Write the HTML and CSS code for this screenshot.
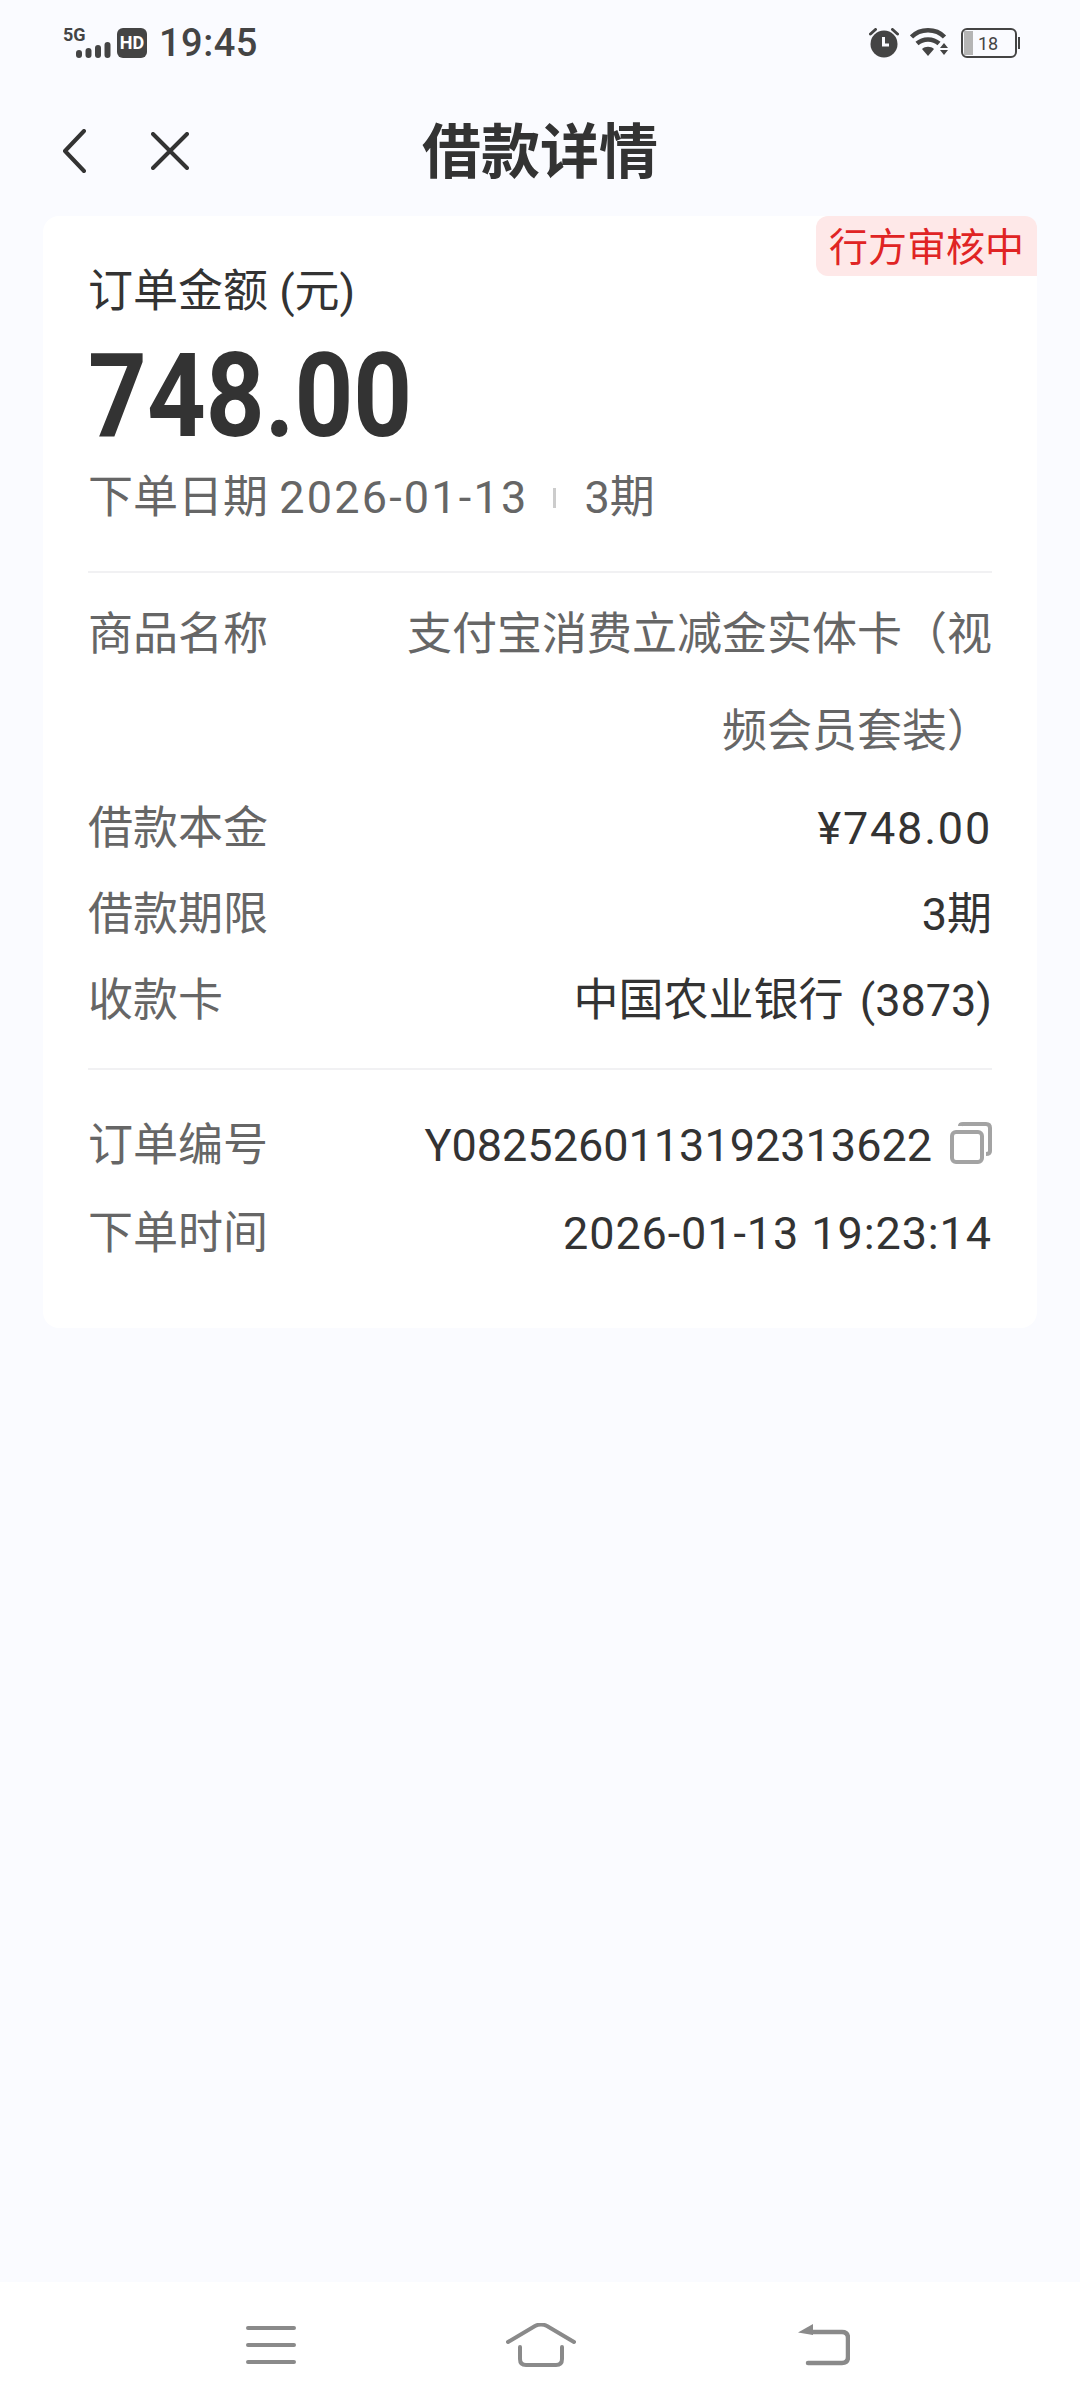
FILE: index.html
```html
<!DOCTYPE html>
<html lang="zh-CN">
<head>
    <meta charset="UTF-8">
    <meta name="viewport" content="width=device-width, initial-scale=1.0">
    <title>借款详情</title>
    <link rel="stylesheet" href="styles.css">
</head>
<body>
<div class="page">
    <div class="status-bar">
        <div class="status-left">
            <div class="signal">
                <span class="signal-type">5G</span>
                <svg class="signal-bars" width="35" height="16" viewBox="0 0 35 16">
                    <rect x="0" y="8" width="6" height="8" rx="3" />
                    <rect x="9.500" y="6" width="6" height="10" rx="3" />
                    <rect x="19" y="3" width="6" height="13" rx="3" />
                    <rect x="28.500" y="0" width="6" height="16" rx="3" />
                </svg>
            </div>
            <span class="hd-badge">HD</span>
            <span class="clock">19:45</span>
        </div>
        <div class="status-right">
            <svg width="30" height="30" viewBox="0 0 30 30">
                <circle cx="15" cy="16" r="13.500" fill="#444" />
                <path d="M1.500 6 L6.500 1.500 M28.500 6 L23.500 1.500" stroke="#444" stroke-width="3" stroke-linecap="round" />
                <path d="M14.500 9 V17 H20" fill="none" stroke="#fafbff" stroke-width="3" />
            </svg>
            <svg class="wifi" width="39" height="30" viewBox="0 0 39 30">
                <path d="M1.500 9 C10 0 26 0 34.500 9" fill="none" stroke="#444" stroke-width="4.500" />
                <path d="M7 15.500 C13 10 23 10 29 15.500" fill="none" stroke="#444" stroke-width="4.500" />
                <path d="M12 21 C15 18 21 18 24 21 L18 28 Z" fill="#444" />
                <path d="M34 15 L38 20 H30 Z M30 22 H38 L34 27 Z" fill="#444" />
            </svg>
            <div class="battery">
                <div class="battery-body">
                    <span class="battery-level"></span>
                    <span class="battery-text">18</span>
                </div>
                <span class="battery-cap"></span>
            </div>
        </div>
    </div>

    <div class="title-bar">
        <div class="title-actions">
            <svg width="24" height="44" viewBox="0 0 24 44">
                <path d="M22 2 L3 22 L22 42" fill="none" stroke="#333" stroke-width="4" stroke-linecap="round" stroke-linejoin="round" />
            </svg>
            <svg width="38" height="38" viewBox="0 0 38 38">
                <path d="M2 2 L36 36 M36 2 L2 36" fill="none" stroke="#333" stroke-width="4" stroke-linecap="round" />
            </svg>
        </div>
        <h1 class="title">借款详情</h1>
    </div>

    <main class="card">
        <span class="status-tag">行方审核中</span>

        <section class="summary">
            <div class="amount-label">订单金额 (元)</div>
            <div class="amount">748.00</div>
            <div class="order-meta">
                <span>下单日期 <span class="meta-date">2026-01-13</span></span>
                <span class="meta-split"></span>
                <span>3期</span>
            </div>
        </section>

        <section class="detail-group">
            <div class="detail-row detail-row-wrap">
                <span class="detail-label">商品名称</span>
                <span class="detail-value detail-value-muted">支付宝消费立减金实体卡（视频会员套装）</span>
            </div>
            <div class="detail-row">
                <span class="detail-label">借款本金</span>
                <span class="detail-value detail-value-wide">¥748.00</span>
            </div>
            <div class="detail-row">
                <span class="detail-label">借款期限</span>
                <span class="detail-value">3期</span>
            </div>
            <div class="detail-row">
                <span class="detail-label">收款卡</span>
                <span class="detail-value detail-value-card">中国农业银行 (3873)</span>
            </div>
        </section>

        <section class="detail-group detail-group-last">
            <div class="detail-row detail-row-id">
                <span class="detail-label">订单编号</span>
                <span class="detail-value detail-value-copy">
                    Y0825260113192313622
                    <svg class="copy-icon" width="42" height="42" viewBox="0 0 42 42">
                        <rect x="2" y="10" width="30" height="30" rx="4" fill="none" stroke="#a3a3a3" stroke-width="4" />
                        <path d="M10 4 Q10 2 13 2 H36 Q40 2 40 6 V29 Q40 32 36 32" fill="none" stroke="#a3a3a3" stroke-width="4" />
                    </svg>
                </span>
            </div>
            <div class="detail-row">
                <span class="detail-label">下单时间</span>
                <span class="detail-value detail-value-time">2026-01-13 19:23:14</span>
            </div>
        </section>
    </main>

    <div class="spacer"></div>

    <nav class="nav-bar">
        <svg width="50" height="38" viewBox="0 0 50 38">
            <path d="M2 2 H48 M2 19 H48 M2 36 H48" stroke="#8a8a8a" stroke-width="4" stroke-linecap="round" />
        </svg>
        <svg class="nav-home" width="70" height="44" viewBox="0 0 70 44">
            <path d="M2 19 L29 3 Q35 0 41 3 L68 19" fill="none" stroke="#8a8a8a" stroke-width="4" stroke-linecap="round" />
            <path d="M14 24 V36 Q14 42 20 42 H50 Q56 42 56 36 V24" fill="none" stroke="#8a8a8a" stroke-width="4" stroke-linecap="round" />
        </svg>
        <svg width="52" height="42" viewBox="0 0 52 42">
            <path d="M14 8 H44 Q50 8 50 14 V33 Q50 39 44 39 H10" fill="none" stroke="#8a8a8a" stroke-width="4.500" stroke-linecap="round" />
            <path d="M0 8.500 L15 0 V11 Z" fill="#8a8a8a" />
        </svg>
    </nav>
</div>
</body>
</html>
```

FILE: styles.css
```css
* {
    box-sizing: border-box;
}

body {
    margin: 0;
    background-color: #fafbff;
    color: #333;
    font-family: Roboto, "Noto Sans CJK SC", sans-serif;
}

.page {
    display: flex;
    flex-direction: column;
    width: 1080px;
    height: 2408px;
    overflow: hidden;
}

/* status bar */
.status-bar {
    display: flex;
    justify-content: space-between;
    align-items: center;
    height: 86px;
    padding: 0 60px 0 63px;
    color: #444;
}

.status-left,
.status-right {
    display: flex;
    align-items: center;
}

.signal {
    display: flex;
    flex-direction: column;
    width: 48px;
    height: 30px;
    margin-right: 6px;
}

.signal-type {
    font-size: 18px;
    font-weight: 700;
    line-height: 14px;
}

.signal-bars {
    align-self: flex-end;
    fill: #444;
}

.hd-badge {
    width: 30px;
    height: 30px;
    border-radius: 6px;
    margin-right: 12px;
    background-color: #444;
    color: #fff;
    font-size: 18px;
    font-weight: 700;
    line-height: 30px;
    text-align: center;
}

.clock {
    font-size: 38px;
    font-weight: 500;
    letter-spacing: 0.500px;
    line-height: 44px;
}

.wifi {
    margin: 0 12px 0 11px;
}

.battery {
    display: flex;
    align-items: center;
}

.battery-body {
    display: flex;
    align-items: center;
    width: 56px;
    height: 30px;
    padding: 1px;
    border: 2.500px solid #444;
    border-radius: 6px;
}

.battery-level {
    width: 9px;
    height: 100%;
    background-color: #b5b5b5;
}

.battery-text {
    margin-left: 5px;
    font-size: 18px;
}

.battery-cap {
    width: 2px;
    height: 12px;
    margin-left: 1px;
    background-color: #444;
}

/* title */
.title-bar {
    display: grid;
    grid-template-columns: 1fr auto 1fr;
    align-items: center;
    height: 130px;
    padding: 0 62px;
}

.title-actions {
    display: flex;
    align-items: center;
    gap: 65px;
}

.title {
    margin: 3px 0 0;
    font-size: 59px;
    font-weight: 700;
    line-height: 80px;
}

/* card */
.card {
    position: relative;
    height: 1112px;
    margin: 0 43px;
    padding: 0 45px;
    border-radius: 16px;
    background-color: #fff;
}

.status-tag {
    position: absolute;
    top: 0;
    right: 0;
    width: 221px;
    height: 60px;
    border-radius: 12px 12px 0 12px;
    background-color: #fee8e8;
    color: #e02424;
    font-size: 39px;
    line-height: 64px;
    text-align: center;
}

.summary {
    height: 357px;
    padding-top: 43px;
    border-bottom: 2px solid #f1f1f3;
}

.amount-label {
    font-size: 45px;
    line-height: 66px;
}

.amount {
    height: 134px;
    margin-top: 4px;
    font-size: 116px;
    font-weight: 700;
    line-height: 134px;
    transform: scaleX(0.885);
    transform-origin: left center;
}

.order-meta {
    display: flex;
    align-items: center;
    margin-top: 2px;
    color: #666;
    font-size: 45px;
    line-height: 66px;
}

.meta-date {
    letter-spacing: 2.200px;
}

.meta-split {
    width: 3px;
    height: 20px;
    margin: 0 28px 0 25px;
    background-color: #ccc;
}

.detail-group {
    padding: 13px 0 24px;
    border-bottom: 2px solid #f1f1f3;
}

.detail-group-last {
    padding-top: 33px;
    border-bottom: 0;
}

.detail-row {
    display: flex;
    justify-content: space-between;
    align-items: flex-start;
    font-size: 45px;
    line-height: 86px;
}

.detail-row-wrap {
    margin-bottom: 6px;
    line-height: 97px;
}

.detail-row-id {
    margin-bottom: 2px;
}

.detail-label {
    flex-shrink: 0;
    color: #666;
}

.detail-value {
    text-align: right;
}

.detail-value-muted {
    max-width: 590px;
    color: #666;
}

.detail-value-wide {
    letter-spacing: 1.800px;
}

.detail-value-card {
    word-spacing: 5px;
}

.detail-value-time {
    letter-spacing: 0.900px;
}

.detail-value-copy {
    display: flex;
    align-items: center;
    gap: 18px;
    margin-left: auto;
    white-space: nowrap;
}

.copy-icon {
    margin-top: -6px;
}

.spacer {
    flex: 1;
}

/* bottom nav */
.nav-bar {
    display: flex;
    align-items: center;
    height: 126px;
    padding-left: 246px;
    background-color: #fff;
}

.nav-home {
    margin: 0 222px 0 210px;
}
```
